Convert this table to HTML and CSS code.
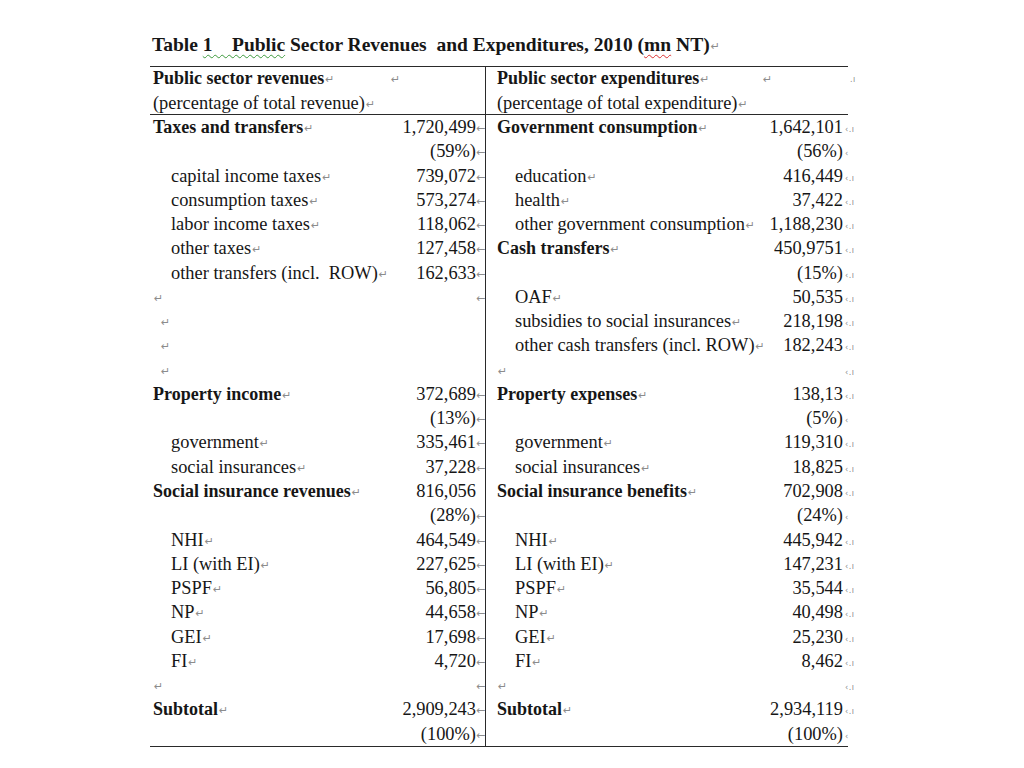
FILE: index.html
```html
<!DOCTYPE html>
<html lang="en">
<head>
<meta charset="utf-8">
<title>Table 1 Public Sector Revenues and Expenditures, 2010</title>
<link rel="stylesheet" href="styles.css">
</head>
<body>
<div class="page">
  <h1 class="title">Table <span class="spell">1    Public</span> Sector Revenues  and Expenditures, 2010 (<span class="err">mn</span> NT)<span class="pm">↵</span></h1>
  <div class="tbl">
    <div class="c hd hl"><b>Public sector revenues</b><span class="pm">↵</span><br>(percentage of total revenue)<span class="pm">↵</span></div>
    <div class="c hd hn"><span class="pm">↵</span></div>
    <div class="c hd r"><b>Public sector expenditures</b><span class="pm">↵</span><br>(percentage of total expenditure)<span class="pm">↵</span></div>
    <div class="c hd hn rn-h"><span class="pm">↵</span><span class="ce ce-h">.ı</span></div>

    <div class="c l"><b>Taxes and transfers</b><span class="pm">↵</span></div>
    <div class="c n">1,720,499<span class="lm">←</span></div>
    <div class="c r"><b>Government consumption</b><span class="pm">↵</span></div>
    <div class="c rn">1,642,101<span class="ce">‹.ı</span></div>

    <div class="c l"></div>
    <div class="c n">(59%)<span class="lm">←</span></div>
    <div class="c r"></div>
    <div class="c rn">(56%)<span class="ce">‹</span></div>

    <div class="c l i">capital income taxes<span class="pm">↵</span></div>
    <div class="c n">739,072<span class="lm">←</span></div>
    <div class="c r i">education<span class="pm">↵</span></div>
    <div class="c rn">416,449<span class="ce">‹.ı</span></div>

    <div class="c l i">consumption taxes<span class="pm">↵</span></div>
    <div class="c n">573,274<span class="lm">←</span></div>
    <div class="c r i">health<span class="pm">↵</span></div>
    <div class="c rn">37,422<span class="ce">‹.ı</span></div>

    <div class="c l i">labor income taxes<span class="pm">↵</span></div>
    <div class="c n">118,062<span class="lm">←</span></div>
    <div class="c r i">other government consumption<span class="pm">↵</span></div>
    <div class="c rn">1,188,230<span class="ce">‹.ı</span></div>

    <div class="c l i">other taxes<span class="pm">↵</span></div>
    <div class="c n">127,458<span class="lm">←</span></div>
    <div class="c r"><b>Cash transfers</b><span class="pm">↵</span></div>
    <div class="c rn">450,9751<span class="ce">‹.ı</span></div>

    <div class="c l i">other transfers (incl.  ROW)<span class="pm">↵</span></div>
    <div class="c n">162,633<span class="lm">←</span></div>
    <div class="c r"></div>
    <div class="c rn">(15%)<span class="ce">‹.ı</span></div>

    <div class="c l"><span class="pm">↵</span></div>
    <div class="c n"><span class="lm">←</span></div>
    <div class="c r i">OAF<span class="pm">↵</span></div>
    <div class="c rn">50,535<span class="ce">‹.ı</span></div>

    <div class="c l e"><span class="pm">↵</span></div>
    <div class="c n"></div>
    <div class="c r i">subsidies to social insurances<span class="pm">↵</span></div>
    <div class="c rn">218,198<span class="ce">‹.ı</span></div>

    <div class="c l e"><span class="pm">↵</span></div>
    <div class="c n"></div>
    <div class="c r i">other cash transfers (incl. ROW)<span class="pm">↵</span></div>
    <div class="c rn">182,243<span class="ce">‹.ı</span></div>

    <div class="c l e"><span class="pm">↵</span></div>
    <div class="c n"></div>
    <div class="c r"><span class="pm">↵</span></div>
    <div class="c rn"><span class="ce">‹.ı</span></div>

    <div class="c l"><b>Property income</b><span class="pm">↵</span></div>
    <div class="c n">372,689<span class="lm">←</span></div>
    <div class="c r"><b>Property expenses</b><span class="pm">↵</span></div>
    <div class="c rn">138,13<span class="ce">‹.ı</span></div>

    <div class="c l"></div>
    <div class="c n">(13%)<span class="lm">←</span></div>
    <div class="c r"></div>
    <div class="c rn">(5%)<span class="ce">‹</span></div>

    <div class="c l i">government<span class="pm">↵</span></div>
    <div class="c n">335,461<span class="lm">←</span></div>
    <div class="c r i">government<span class="pm">↵</span></div>
    <div class="c rn">119,310<span class="ce">‹.ı</span></div>

    <div class="c l i">social insurances<span class="pm">↵</span></div>
    <div class="c n">37,228<span class="lm">←</span></div>
    <div class="c r i">social insurances<span class="pm">↵</span></div>
    <div class="c rn">18,825<span class="ce">‹.ı</span></div>

    <div class="c l"><b>Social insurance revenues</b><span class="pm">↵</span></div>
    <div class="c n">816,056<span class="lm"></span></div>
    <div class="c r"><b>Social insurance benefits</b><span class="pm">↵</span></div>
    <div class="c rn">702,908<span class="ce">‹.ı</span></div>

    <div class="c l"></div>
    <div class="c n">(28%)<span class="lm">←</span></div>
    <div class="c r"></div>
    <div class="c rn">(24%)<span class="ce">‹</span></div>

    <div class="c l i">NHI<span class="pm">↵</span></div>
    <div class="c n">464,549<span class="lm">←</span></div>
    <div class="c r i">NHI<span class="pm">↵</span></div>
    <div class="c rn">445,942<span class="ce">‹.ı</span></div>

    <div class="c l i">LI (with EI)<span class="pm">↵</span></div>
    <div class="c n">227,625<span class="lm">←</span></div>
    <div class="c r i">LI (with EI)<span class="pm">↵</span></div>
    <div class="c rn">147,231<span class="ce">‹.ı</span></div>

    <div class="c l i">PSPF<span class="pm">↵</span></div>
    <div class="c n">56,805<span class="lm">←</span></div>
    <div class="c r i">PSPF<span class="pm">↵</span></div>
    <div class="c rn">35,544<span class="ce">‹.ı</span></div>

    <div class="c l i">NP<span class="pm">↵</span></div>
    <div class="c n">44,658<span class="lm">←</span></div>
    <div class="c r i">NP<span class="pm">↵</span></div>
    <div class="c rn">40,498<span class="ce">‹.ı</span></div>

    <div class="c l i">GEI<span class="pm">↵</span></div>
    <div class="c n">17,698<span class="lm">←</span></div>
    <div class="c r i">GEI<span class="pm">↵</span></div>
    <div class="c rn">25,230<span class="ce">‹.ı</span></div>

    <div class="c l i">FI<span class="pm">↵</span></div>
    <div class="c n">4,720<span class="lm">←</span></div>
    <div class="c r i">FI<span class="pm">↵</span></div>
    <div class="c rn">8,462<span class="ce">‹.ı</span></div>

    <div class="c l"><span class="pm">↵</span></div>
    <div class="c n"><span class="lm">←</span></div>
    <div class="c r"><span class="pm">↵</span></div>
    <div class="c rn"><span class="ce">‹.ı</span></div>

    <div class="c l"><b>Subtotal</b><span class="pm">↵</span></div>
    <div class="c n">2,909,243<span class="lm">←</span></div>
    <div class="c r"><b>Subtotal</b><span class="pm">↵</span></div>
    <div class="c rn">2,934,119<span class="ce">‹.ı</span></div>

    <div class="c l"></div>
    <div class="c n">(100%)<span class="lm">←</span></div>
    <div class="c r"></div>
    <div class="c rn">(100%)<span class="ce">‹</span></div>
  </div>
</div>
</body>
</html>
```

FILE: styles.css
```css
html, body {
  margin: 0;
  padding: 0;
  background: #ffffff;
}

.page {
  padding: 33px 0 0 150px;
  font-family: "Liberation Serif", "Times New Roman", serif;
  color: #161616;
}

.title {
  margin: 0;
  padding-left: 2px;
  font-size: 19.5px;
  line-height: 24px;
  font-weight: bold;
  white-space: pre;
}

.spell {
  text-decoration: underline wavy #3c9a3c;
  text-decoration-thickness: 1px;
  text-underline-offset: 3px;
}

.err {
  text-decoration: underline wavy #d93030;
  text-decoration-thickness: 1px;
  text-underline-offset: 3px;
}

.pm {
  font-family: "DejaVu Sans", sans-serif;
  font-size: 11px;
  font-weight: normal;
  color: #8c8c8c;
  margin-left: 1px;
  vertical-align: 1px;
}

.tbl {
  margin-top: 7px;
  width: 698px;
  box-sizing: border-box;
  display: grid;
  grid-template-columns: 238px 97px 275px 88px;
  grid-template-rows: 48px;
  grid-auto-rows: 24.28px;
  border-top: 1px solid #2a2a2a;
  border-bottom: 1.5px solid #2a2a2a;
  font-size: 18.4px;
  line-height: 24.28px;
}

.tbl b {
  font-size: 18px;
}

.c {
  white-space: pre;
  min-width: 0;
}

.hd {
  box-sizing: border-box;
  height: 48px;
  line-height: 23.5px;
  border-bottom: 1.5px solid #2a2a2a;
}

.hl {
  padding-left: 3px;
}

.l {
  padding-left: 3px;
}

.l.i {
  padding-left: 21px;
}

.l.e {
  padding-left: 10px;
}

.hn {
  padding-left: 2px;
}

.n {
  text-align: right;
}

.r {
  border-left: 1px solid #2a2a2a;
  padding-left: 11px;
}

.r.i {
  padding-left: 29px;
}

.rn {
  text-align: right;
}

.rn-h {
  text-align: left;
  position: relative;
}

.lm {
  display: inline-block;
  width: 9px;
  font-family: "DejaVu Sans", sans-serif;
  font-size: 11px;
  color: #8c8c8c;
  text-align: left;
  vertical-align: 1px;
}

.ce {
  display: inline-block;
  width: 12px;
  margin-left: 2px;
  margin-right: -9px;
  font-family: "DejaVu Sans", sans-serif;
  font-size: 8px;
  color: #8c8c8c;
  text-align: left;
  vertical-align: 1px;
  letter-spacing: 0.5px;
}

.ce-h {
  position: absolute;
  left: 90px;
  top: 1px;
  margin: 0;
}
```
